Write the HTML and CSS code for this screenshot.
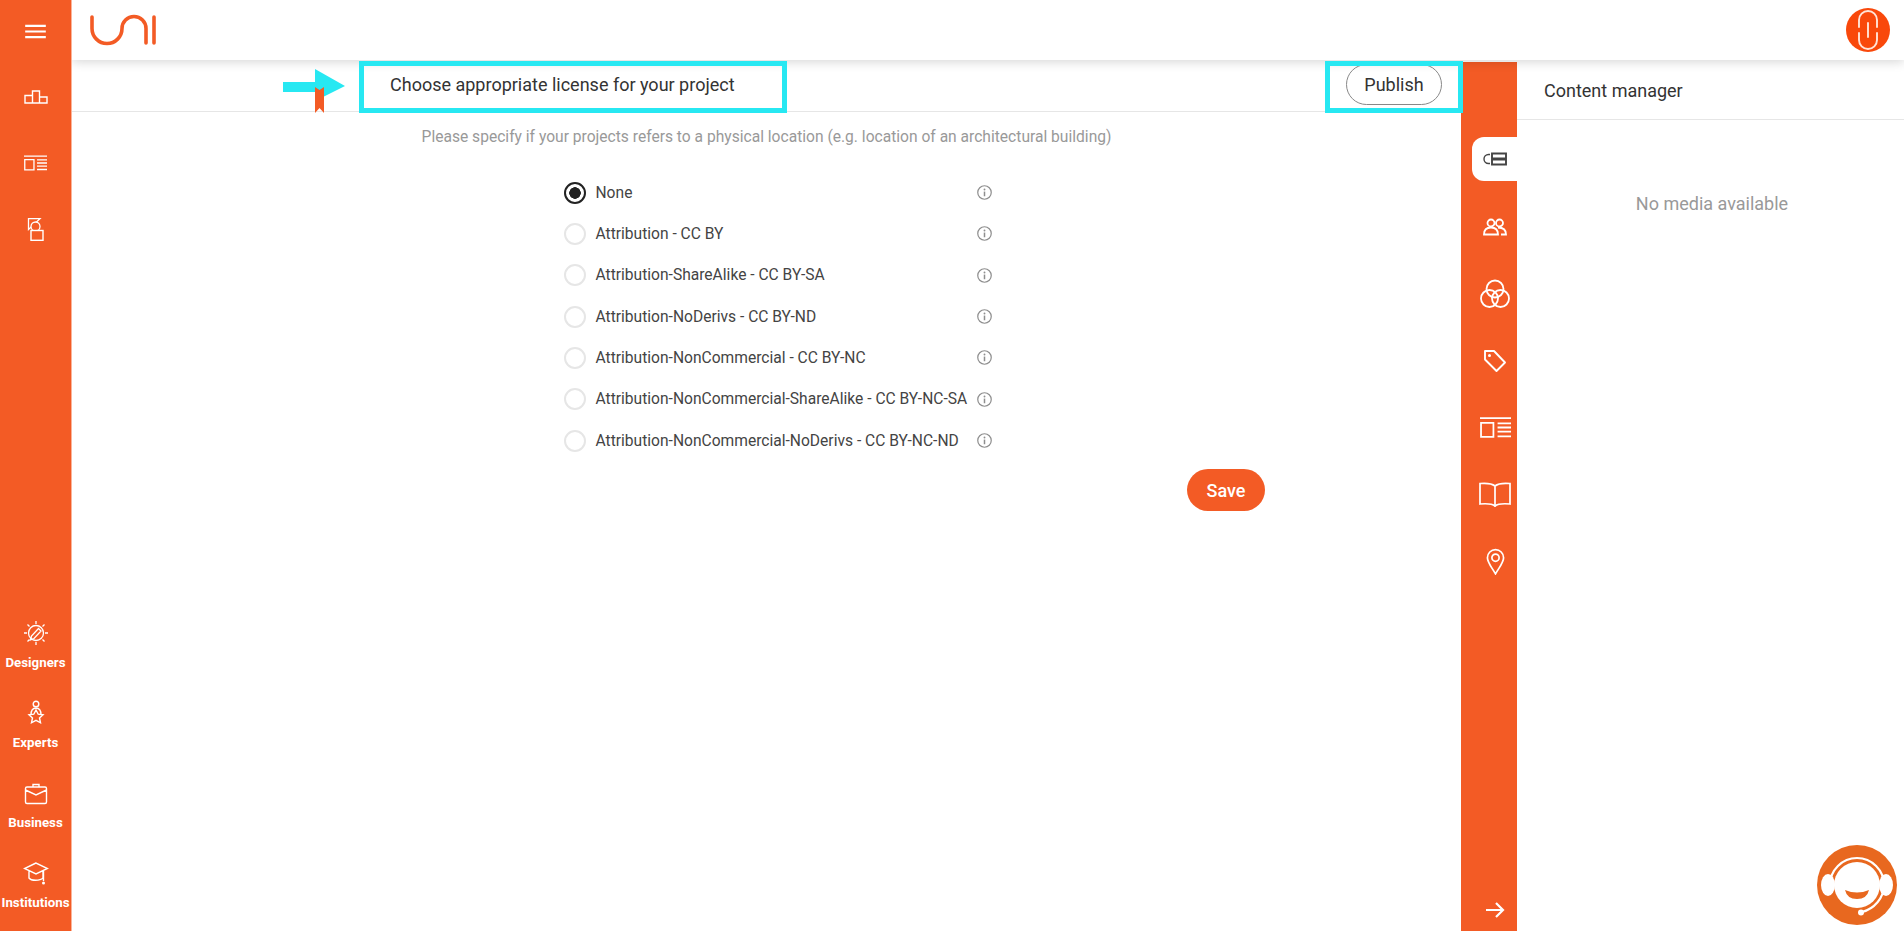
FILE: index.html
```html
<!DOCTYPE html>
<html lang="en">
<head>
<meta charset="utf-8">
<title>Choose appropriate license</title>
<link rel="stylesheet" href="styles.css">
</head>
<body>
<svg class="defs" width="0" height="0" aria-hidden="true">
  <symbol id="info" viewBox="0 0 16 16"><circle cx="8" cy="8" r="7.200" fill="none" stroke="currentColor" stroke-width="1.300"/><path d="M8 7v5" stroke="currentColor" stroke-width="1.600"/><circle cx="8" cy="4.800" r="1" fill="currentColor"/></symbol>
  <symbol id="news" viewBox="0 0 30 20"><path d="M0 1h30M1 5.500h12v13.500H1zM17 6h13M17 10h13M17 14h13M17 18.500h13" fill="none" stroke="currentColor" stroke-width="1.700"/></symbol>
</svg>
<div class="app">
  <aside class="sidebar">
    <nav class="side-top">
      <div class="side-menu"><svg class="ic-menu" viewBox="0 0 22 16"><path d="M0 2h22M0 8h22M0 14h22" stroke="currentColor" stroke-width="2.200"/></svg></div>
      <div class="side-item"><svg class="ic-podium" viewBox="0 0 24 14"><path d="M1 5.500h7.500V13H1zM8.500 1h7v12h-7zM15.500 7H23v6h-7.500z" fill="none" stroke="currentColor" stroke-width="1.400"/></svg></div>
      <div class="side-item"><svg class="ic-news-s"><use href="#news"/></svg></div>
      <div class="side-item"><svg class="ic-shapes" viewBox="0 0 17 23"><path d="M1.500 .7H13L1.500 11.500z" fill="none" stroke="currentColor" stroke-width="1.300"/><circle cx="8.500" cy="8.500" r="4.500" fill="#f35b25" stroke="currentColor" stroke-width="1.300"/><rect x="4" y="12.500" width="12" height="9.800" fill="#f35b25" stroke="currentColor" stroke-width="1.400"/></svg></div>
    </nav>
    <nav class="side-bottom">
      <div class="side-link"><svg class="ic-side" viewBox="0 0 26 26"><circle cx="13" cy="13" r="7.500" fill="none" stroke="currentColor" stroke-width="1.300"/><path d="M13 1v3M13 22v3M1 13h3M22 13h3M4.500 4.500l2 2M19.500 19.500l2 2M21.500 4.500l-2 2M6.500 19.500l-2 2M7.500 20l1-4 7-7.500 2.500 2.500-7 7.500z" fill="none" stroke="currentColor" stroke-width="1.300"/></svg><span>Designers</span></div>
      <div class="side-link"><svg class="ic-side" viewBox="0 0 26 26"><circle cx="13" cy="4" r="2.800" fill="none" stroke="currentColor" stroke-width="1.400"/><path d="M8 15c0-5 2-7 5-7s5 2 5 7M13 10l2.200 4.200 4.800 .6-3.500 3.200 1 4.800-4.500-2.400-4.500 2.400 1-4.800-3.500-3.200 4.800-.6z" fill="none" stroke="currentColor" stroke-width="1.400"/></svg><span>Experts</span></div>
      <div class="side-link"><svg class="ic-side" viewBox="0 0 26 26"><path d="M4 7h18a1.500 1.500 0 0 1 1.500 1.500V22a1.500 1.500 0 0 1-1.500 1.500H4A1.500 1.500 0 0 1 2.500 22V8.500A1.500 1.500 0 0 1 4 7zM2.500 10L13 15l10.500-5M10 7V4.500h6V7" fill="none" stroke="currentColor" stroke-width="1.400"/></svg><span>Business</span></div>
      <div class="side-link"><svg class="ic-side" viewBox="0 0 26 26"><path d="M13 3L1.500 8.500 13 14l11.500-5.500zM6 11v7c2 3 11 3 14 0v-7M20.500 11v10" fill="none" stroke="currentColor" stroke-width="1.400"/><circle cx="20.500" cy="23" r="1.500" fill="currentColor"/></svg><span>Institutions</span></div>
    </nav>
  </aside>
  <div class="shell">
    <header class="topbar">
      <svg class="logo" viewBox="0 0 66 30"><path d="M2 2v11.500a15 15 0 0 0 30 0a12 12 0 0 1 24 0V28M64 2v26" fill="none" stroke="currentColor" stroke-width="3.600" stroke-linecap="round"/></svg>
      <svg class="clip" viewBox="0 0 44 44"><circle cx="22" cy="22" r="22" fill="#f9480b"/><path d="M13 19V12a9 9 0 0 1 18 0v7M13 25v7a9 9 0 0 0 18 0v-7M22 15v14" fill="none" stroke="#ffe3d8" stroke-width="1.900" stroke-linecap="round"/></svg>
    </header>
    <div class="workspace">
      <main class="main">
        <div class="toolbar">
          <h1 class="title">Choose appropriate license for your project</h1>
          <button class="publish" type="button">Publish</button>
        </div>
        <p class="hint">Please specify if your projects refers to a physical location (e.g. location of an architectural building)</p>
        <form class="licenses">
          <div class="row"><span class="radio radio-on"></span><span class="label">None</span><svg class="info"><use href="#info"/></svg></div>
          <div class="row"><span class="radio"></span><span class="label">Attribution - CC BY</span><svg class="info"><use href="#info"/></svg></div>
          <div class="row"><span class="radio"></span><span class="label">Attribution-ShareAlike - CC BY-SA</span><svg class="info"><use href="#info"/></svg></div>
          <div class="row"><span class="radio"></span><span class="label">Attribution-NoDerivs - CC BY-ND</span><svg class="info"><use href="#info"/></svg></div>
          <div class="row"><span class="radio"></span><span class="label">Attribution-NonCommercial - CC BY-NC</span><svg class="info"><use href="#info"/></svg></div>
          <div class="row"><span class="radio"></span><span class="label">Attribution-NonCommercial-ShareAlike - CC BY-NC-SA</span><svg class="info"><use href="#info"/></svg></div>
          <div class="row"><span class="radio"></span><span class="label">Attribution-NonCommercial-NoDerivs - CC BY-NC-ND</span><svg class="info"><use href="#info"/></svg></div>
          <button class="save" type="button">Save</button>
        </form>
      </main>
      <nav class="rail">
        <div class="rail-tab"><svg class="ic-list" viewBox="0 0 24 14"><path d="M7 2.500H5.500a4.500 4.500 0 0 0 0 9H7" fill="none" stroke="currentColor" stroke-width="1.400"/><path d="M9 1.500h14v5H9zM9 7.500h14v5H9z" fill="none" stroke="currentColor" stroke-width="1.900"/></svg></div>
        <div class="rail-item"><svg class="ic-people" viewBox="0 0 24 18"><circle cx="8" cy="5" r="3.500" fill="none" stroke="currentColor" stroke-width="1.800"/><circle cx="16.500" cy="5" r="3.500" fill="none" stroke="currentColor" stroke-width="1.800"/><path d="M1 16.500c0-5 3-7 7-7s7 2 7 7zM15 9.500c5 0 8 2.500 8 7h-5" fill="none" stroke="currentColor" stroke-width="1.800"/></svg></div>
        <div class="rail-item"><svg class="ic-circles" viewBox="0 0 30 30"><circle cx="15" cy="10" r="8.500" fill="none" stroke="currentColor" stroke-width="1.800"/><circle cx="9.500" cy="19.500" r="8.500" fill="none" stroke="currentColor" stroke-width="1.800"/><circle cx="20.500" cy="19.500" r="8.500" fill="none" stroke="currentColor" stroke-width="1.800"/></svg></div>
        <div class="rail-item"><svg class="ic-tag" viewBox="0 0 24 24"><path d="M2 2h9l11 11.500-8.500 8.500L2 10.500z" fill="none" stroke="currentColor" stroke-width="1.900" stroke-linejoin="round"/><circle cx="6.500" cy="6.500" r="1.500" fill="currentColor"/></svg></div>
        <div class="rail-item"><svg class="ic-news-l"><use href="#news"/></svg></div>
        <div class="rail-item"><svg class="ic-book" viewBox="0 0 32 26"><path d="M16 4C13 1.500 7 1 1 1.500V22c6-.5 12-.5 15 2 3-2.500 9-2.500 15-2V1.500C25 1 19 1.500 16 4zV25" fill="none" stroke="currentColor" stroke-width="1.700"/></svg></div>
        <div class="rail-item"><svg class="ic-pin" viewBox="0 0 20 28"><path d="M10 27C6 20 1.500 15 1.500 10a8.500 8.500 0 0 1 17 0c0 5-4.500 10-8.500 17z" fill="none" stroke="currentColor" stroke-width="1.800"/><circle cx="10" cy="10" r="3.800" fill="none" stroke="currentColor" stroke-width="1.800"/></svg></div>
        <div class="rail-arrow"><svg class="ic-arrow" viewBox="0 0 20 18"><path d="M1 9h17M11 2l7 7-7 7" fill="none" stroke="currentColor" stroke-width="2.200"/></svg></div>
      </nav>
      <section class="panel">
        <h2 class="panel-title">Content manager</h2>
        <p class="panel-empty">No media available</p>
      </section>
    </div>
  </div>
</div>
<div class="mark mark-title"></div>
<div class="mark mark-publish"></div>
<svg class="callout" viewBox="0 0 62 44"><path d="M0 13h32V0l30 17-30 15v-9H0z" fill="#27e8f2"/><path d="M32 18l4.500 3 4.500-3v26l-4.500-5-4.500 5z" fill="#f35b25"/></svg>
<svg class="support" viewBox="0 0 80 80"><circle cx="40" cy="40" r="40" fill="#e8681f"/><ellipse cx="11" cy="40" rx="7" ry="11" fill="#fff"/><ellipse cx="69" cy="40" rx="7" ry="11" fill="#fff"/><circle cx="40" cy="40" r="23" fill="#fff"/><path d="M13 40a27 27 0 0 1 54 0c0 13-10 24-22 27" fill="none" stroke="#fff" stroke-width="2.200"/><circle cx="44" cy="67.500" r="3" fill="#fff"/><path d="M28 45q12 5 24 0q-2 9-12 9t-12-9z" fill="#e8681f"/></svg>
</body>
</html>
```
FILE: styles.css
```css
* { box-sizing: border-box; }
html, body { margin: 0; height: 100%; overflow: hidden; background: #fff; }
body { font-family: Roboto, "Liberation Sans", sans-serif; color: #333; font-size: 15.600px; }
.defs { position: absolute; }
.app { display: flex; height: 931px; }

.sidebar { width: 72px; flex: none; background: #f35b25; border-right: 1px solid #fbb49a; color: #fff; display: flex; flex-direction: column; justify-content: space-between; position: relative; z-index: 3; padding-bottom: 21px; }
.side-top { display: flex; flex-direction: column; align-items: center; }
.side-menu { height: 62px; margin-bottom: 2px; width: 100%; display: flex; align-items: center; justify-content: center; }
.side-item { height: 66px; width: 100%; display: flex; align-items: center; justify-content: center; }
.ic-menu { width: 21px; height: 15px; }
.ic-podium { width: 24px; height: 14px; }
.ic-news-s { width: 23px; height: 16px; }
.ic-shapes { width: 17px; height: 23px; }
.side-bottom { display: flex; flex-direction: column; gap: 30px; }
.side-link { height: 50px; display: flex; flex-direction: column; align-items: center; gap: 10px; font-size: 13.300px; line-height: 14px; font-weight: 700; white-space: nowrap; }
.ic-side { width: 26px; height: 26px; flex: none; }

.shell { flex: 1; min-width: 0; display: flex; flex-direction: column; }
.topbar { height: 60px; flex: none; background: #fff; display: flex; align-items: center; justify-content: space-between; padding: 0 14px 0 18px; box-shadow: 0 2px 10px rgba(0,0,0,.16); position: relative; z-index: 2; color: #f35b25; }
.logo { width: 66px; height: 30px; margin-top: -1px; overflow: visible; }
.clip { width: 44px; height: 44px; }

.workspace { flex: 1; min-height: 0; display: flex; }
.main { flex: 1; min-width: 0; display: flex; flex-direction: column; }
.toolbar { height: 52px; flex: none; border-bottom: 1px solid #e6e6e6; display: flex; align-items: center; justify-content: space-between; padding: 0 19px 2px 318px; }
.title { margin: 0; font-size: 18px; font-weight: 400; color: #333; }
.publish { width: 96px; height: 41px; border: 1px solid #888; border-radius: 21px; background: #fff; font: 400 18px Roboto, sans-serif; color: #333; padding: 0; }
.hint { margin: 15px 0 0; height: 20px; line-height: 20px; text-align: center; color: #999; }
.licenses { margin: 25px 0 0 492px; width: 701px; display: flex; flex-direction: column; }
.row { width: 428px; height: 41.330px; display: flex; align-items: center; }
.radio { width: 22px; height: 22px; flex: none; border-radius: 50%; border: 2px solid #e6e6e6; margin-right: 9.500px; }
.radio-on { border: 2.500px solid #222; background: radial-gradient(circle, #222 0 5.500px, #fff 6px); }
.label { flex: 1; white-space: nowrap; color: #444; }
.info { width: 15px; height: 15px; flex: none; color: #8e8e8e; }
.save { align-self: flex-end; width: 78px; height: 42px; margin-top: 8px; border: 0; border-radius: 21px; background: #f35b25; color: #fff; font: 500 18px Roboto, sans-serif; padding: 0; }

.rail { width: 56px; flex: none; margin-top: 2px; background: #f35b25; color: #fff; display: flex; flex-direction: column; align-items: center; padding: 75px 0 0 12px; position: relative; }
.rail-tab { width: 45px; height: 44px; align-self: flex-end; background: #fff; border-radius: 12px 0 0 12px; color: #444; display: flex; align-items: center; justify-content: center; margin-bottom: 12px; flex: none; }
.rail-item { height: 67px; width: 100%; display: flex; align-items: center; justify-content: center; flex: none; }
.rail-arrow { margin-top: auto; height: 30px; display: flex; align-items: flex-start; }
.ic-list { width: 24px; height: 14px; }
.ic-people { width: 24px; height: 18px; }
.ic-circles { width: 30px; height: 30px; }
.ic-tag { width: 24px; height: 24px; }
.ic-news-l { width: 31px; height: 21px; }
.ic-book { width: 32px; height: 26px; }
.ic-pin { width: 19px; height: 27px; }
.ic-arrow { width: 20px; height: 18px; }

.panel { width: 387px; flex: none; }
.panel-title { margin: 0; height: 60px; padding: 0 0 0 27px; border-bottom: 1px solid #e6e6e6; font-size: 18px; font-weight: 400; line-height: 61px; color: #333; }
.panel-empty { margin: 74px 0 0; padding-left: 3px; text-align: center; font-size: 18px; line-height: 20px; color: #999; }

.mark { position: absolute; border: 5px solid #27e8f2; z-index: 4; }
.mark-title { left: 359px; top: 61px; width: 428px; height: 52px; }
.mark-publish { left: 1325px; top: 61px; width: 138px; height: 52px; }
.callout { position: absolute; left: 283px; top: 69px; width: 62px; height: 44px; z-index: 4; }
.support { position: absolute; left: 1817px; top: 845px; width: 80px; height: 80px; z-index: 5; }
```
